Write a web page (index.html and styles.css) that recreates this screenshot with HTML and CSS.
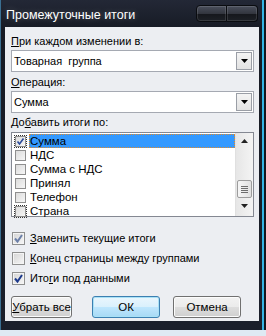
FILE: index.html
```html
<!DOCTYPE html>
<html lang="ru">
<head>
  <meta charset="UTF-8" />
  <title>Промежуточные итоги</title>
  <link rel="stylesheet" href="styles.css">
</head>
<body>
  <div class="window">
    <div class="titlebar">
      <span class="title">Промежуточные итоги</span>
      <div class="caption-buttons">
        <span class="caption-btn"></span>
        <span class="caption-btn"></span>
      </div>
    </div>

    <div class="client">
      <div class="field-label"><u>П</u>ри каждом изменении в:</div>
      <div class="combo">
        <span class="combo-text">Товарная  группа</span>
        <span class="combo-btn"><svg width="7" height="4" viewBox="0 0 7 4"><path d="M0 0h7L3.5 4z" fill="#000"/></svg></span>
      </div>

      <div class="field-label"><u>О</u>перация:</div>
      <div class="combo">
        <span class="combo-text">Сумма</span>
        <span class="combo-btn"><svg width="7" height="4" viewBox="0 0 7 4"><path d="M0 0h7L3.5 4z" fill="#000"/></svg></span>
      </div>

      <div class="field-label list-label">До<u>б</u>авить итоги по:</div>
      <div class="listbox">
        <div class="list-items">
          <div class="list-row selected">
            <span class="list-check focus"><svg width="9" height="9" viewBox="0 0 9 9"><path d="M1.5 4.5L3.5 7L7.5 1.5" fill="none" stroke="#2a4a9a" stroke-width="1.6"/></svg></span>
            <span class="list-text">Сумма</span>
          </div>
          <div class="list-row"><span class="list-check"></span><span class="list-text">НДС</span></div>
          <div class="list-row"><span class="list-check"></span><span class="list-text">Сумма с НДС</span></div>
          <div class="list-row"><span class="list-check"></span><span class="list-text">Принял</span></div>
          <div class="list-row"><span class="list-check"></span><span class="list-text">Телефон</span></div>
          <div class="list-row"><span class="list-check focus"></span><span class="list-text">Страна</span></div>
        </div>
        <div class="scrollbar">
          <span class="arrow"><svg width="7" height="4" viewBox="0 0 7 4"><path d="M0 4h7L3.5 0z" fill="#222"/></svg></span>
          <span class="track"></span>
          <span class="thumb"><i></i><i></i><i></i><i></i></span>
          <span class="arrow"><svg width="7" height="4" viewBox="0 0 7 4"><path d="M0 0h7L3.5 4z" fill="#222"/></svg></span>
        </div>
      </div>

      <div class="options">
        <div class="option">
          <span class="checkbox soft"><svg width="11" height="11" viewBox="0 0 11 11"><path d="M2 5.5L4.5 8.5L9 2" fill="none" stroke="#6b7fa8" stroke-width="2"/></svg></span>
          <span><u>З</u>аменить текущие итоги</span>
        </div>
        <div class="option">
          <span class="checkbox"></span>
          <span><u>К</u>онец страницы между группами</span>
        </div>
        <div class="option">
          <span class="checkbox"><svg width="11" height="11" viewBox="0 0 11 11"><path d="M2 5.5L4.5 8.5L9 2" fill="none" stroke="#1c3a8c" stroke-width="2"/></svg></span>
          <span>Ито<u>г</u>и под данными</span>
        </div>
      </div>

      <div class="buttons">
        <button class="btn btn-narrow"><u>У</u>брать все</button>
        <button class="btn btn-default">ОК</button>
        <button class="btn">Отмена</button>
      </div>
    </div>
  </div>
</body>
</html>
```

FILE: styles.css
```css
html, body {
  margin: 0;
  padding: 0;
}

body {
  width: 266px;
  height: 336px;
  overflow: hidden;
  background: #dfeaf3;
  font-family: "Liberation Sans", Arial, sans-serif;
  font-size: 11px;
  color: #000;
}

.window {
  height: 330px;
  padding: 0 7px 9px 5px;
  box-sizing: border-box;
  display: flex;
  flex-direction: column;
  background: linear-gradient(to bottom, #232836, #161a24 30px, #1a1f2b);
  box-shadow: inset -2px 0 0 #12161e, inset -4px 0 0 #35b4e4, inset 1px 0 0 #3a6f92;
}

.titlebar {
  height: 27px;
  display: flex;
  align-items: flex-start;
  justify-content: space-between;
}

.title {
  margin: 9px 0 0 1px;
  color: #fff;
  font-size: 12.5px;
  line-height: 13px;
  text-shadow: 0 0 6px rgba(255, 255, 255, 0.25);
}

.caption-buttons {
  display: flex;
  margin: 5px 1px 0 0;
}

.caption-btn {
  width: 29px;
  height: 15px;
  border: 1px solid #0a0c10;
  background: linear-gradient(to bottom, #4a4f5c, #33363f 50%, #15171c 51%, #1d2026);
  box-shadow: inset 0 0 0 1px rgba(255, 255, 255, 0.12);
}

.caption-btn:first-child {
  border-radius: 4px 0 0 4px;
}

.caption-btn:last-child {
  width: 30px;
  border-left: none;
  border-radius: 0 4px 4px 0;
}

.client {
  flex: 1;
  background: #eceef2;
  padding: 8px 5px 0 6px;
  display: flex;
  flex-direction: column;
}

.field-label {
  line-height: 13px;
  height: 13px;
}

.combo {
  margin: 2px 0 4px;
  height: 22px;
  box-sizing: border-box;
  border: 1px solid #a5a9b2;
  background: #fff;
  display: flex;
  align-items: center;
  padding: 2px 1px 2px 1px;
}

.combo-text {
  flex: 1;
  white-space: pre;
  padding-left: 1px;
}

.combo-btn {
  width: 14px;
  height: 16px;
  border: 1px solid #9a9ea6;
  background: linear-gradient(to bottom, #f4f4f4, #e2e2e2);
  display: flex;
  align-items: center;
  justify-content: center;
}

.list-label {
  margin-top: -1px;
}

.listbox {
  margin-top: 3px;
  height: 85px;
  box-sizing: border-box;
  border: 1px solid #848892;
  background: #fff;
  display: flex;
}

.list-items {
  flex: 1;
  padding-top: 1px;
}

.list-row {
  height: 14px;
  display: flex;
  align-items: center;
  font-size: 11.5px;
}

.list-check {
  width: 9px;
  height: 9px;
  margin: 0 3px 0 3px;
  border: 1px solid #8f8f8f;
  background: linear-gradient(135deg, #dcdcdc, #f6f6f6);
  display: flex;
  align-items: center;
  justify-content: center;
}

.list-check.focus {
  outline: 1px dotted #333;
}

.list-text {
  flex: 1;
  height: 14px;
  line-height: 14px;
  padding-left: 1px;
}

.selected .list-text {
  background: #3399ff;
  outline: 1px dotted #e08a2c;
  outline-offset: -1px;
}

.scrollbar {
  width: 17px;
  display: flex;
  flex-direction: column;
  background: linear-gradient(to right, #e6e6e6, #f4f4f4);
  border-left: 1px solid #e0e0e0;
}

.arrow {
  height: 16px;
  display: flex;
  align-items: center;
  justify-content: center;
}

.track {
  height: 31px;
}

.thumb {
  height: 18px;
  margin: 0 1px;
  box-sizing: border-box;
  border: 1px solid #9c9c9c;
  border-radius: 2px;
  background: linear-gradient(to right, #f6f6f6, #e0e0e0);
  display: flex;
  flex-direction: column;
  justify-content: center;
  align-items: center;
  gap: 1px;
}

.thumb i {
  display: block;
  width: 7px;
  height: 1px;
  background: #6d6d6d;
}

.options {
  margin-top: 11px;
}

.option {
  height: 20px;
  display: flex;
  align-items: center;
}

.checkbox {
  width: 11px;
  height: 11px;
  margin: 0 5px 0 1px;
  border: 1px solid #8e8f8f;
  background: linear-gradient(135deg, #d4d4d4, #f7f7f7);
  box-shadow: inset 0 0 0 1px #f4f4f4;
  display: flex;
  align-items: center;
  justify-content: center;
}

.buttons {
  margin-top: 8px;
  display: flex;
}

.btn {
  width: 71px;
  height: 22px;
  margin: 0 13px 0 0;
  padding: 0;
  border: 1px solid #707070;
  border-radius: 3px;
  background: linear-gradient(to bottom, #f2f2f2, #ebebeb 50%, #dddddd 51%, #cfcfcf);
  box-shadow: inset 0 0 0 1px #fcfcfc;
  font-family: "Liberation Sans", Arial, sans-serif;
  font-size: 11.5px;
  white-space: nowrap;
  color: #000;
}

.btn-narrow {
  width: 64px;
  margin-right: 20px;
}

.btn-default {
  border-color: #3c7fb1;
  background: linear-gradient(to bottom, #eaf6fd, #d9f0fc 50%, #bee6fd 51%, #a7d9f5);
  box-shadow: inset 0 0 0 1px #a9e1f6;
}
```
